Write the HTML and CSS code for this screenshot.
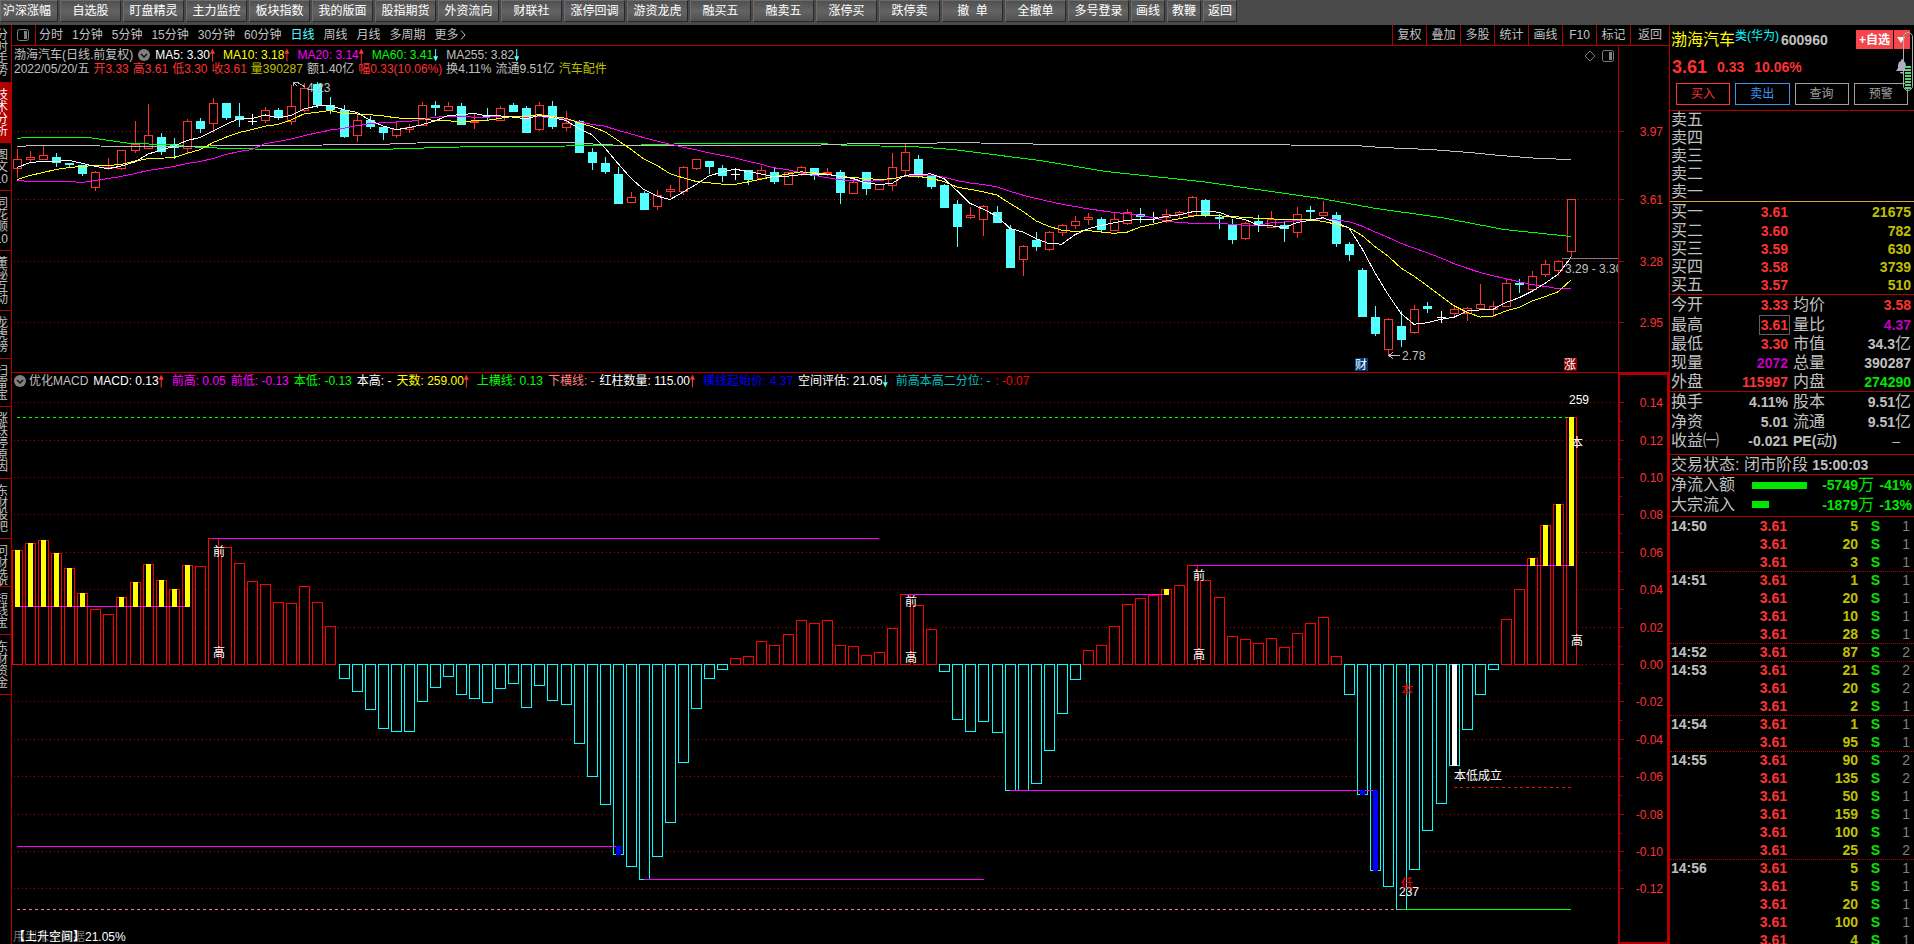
FILE: index.html
```html
<!DOCTYPE html>
<html lang="zh-CN">
<head>
  <meta charset="UTF-8">
  <meta name="viewport" content="width=device-width, initial-scale=1.0">
  <title>渤海汽车 600960</title>
  <link rel="stylesheet" href="styles.css">
</head>
<body>

<nav class="toolbar">
  <button>沪深涨幅</button>
  <button>自选股</button>
  <button>盯盘精灵</button>
  <button>主力监控</button>
  <button>板块指数</button>
  <button>我的版面</button>
  <button>股指期货</button>
  <button>外资流向</button>
  <button>财联社</button>
  <button>涨停回调</button>
  <button>游资龙虎</button>
  <button>融买五</button>
  <button>融卖五</button>
  <button>涨停买</button>
  <button>跌停卖</button>
  <button>撤&nbsp; 单</button>
  <button>全撤单</button>
  <button>多号登录</button>
  <button class="small">画线</button>
  <button class="small">教鞭</button>
  <button class="small">返回</button>
</nav>

<div class="layout">
  <aside class="side-tabs">
    <a href="#" class="first"><span>分</span><span>时</span><span>走</span><span>势</span></a>
    <a href="#" class="active"><span>技</span><span>术</span><span>分</span><span>析</span></a>
    <a href="#"><span>图</span><span>文</span><span>F10</span></a>
    <a href="#"><span>同</span><span>花</span><span>顺</span><span>F10</span></a>
    <a href="#"><span>董</span><span>秘</span><span>互</span><span>动</span></a>
    <a href="#"><span>龙</span><span>虎</span><span>榜</span></a>
    <a href="#"><span>扫</span><span>雷</span><span>宝</span></a>
    <a href="#"><span>涨</span><span>跌</span><span>停</span><span>原</span><span>因</span></a>
    <a href="#"><span>东</span><span>财</span><span>股</span><span>吧</span></a>
    <a href="#" class="cut"><span>问</span><span>财</span><span>选</span><span>股</span></a>
    <a href="#"><span>短</span><span>线</span><span>宝</span></a>
    <a href="#"><span>东</span><span>财</span><span>资</span><span>金</span></a>
  </aside>

  <main class="charts">
    <div class="period-bar">
      <button class="panel-toggle" aria-label="侧栏">
        <svg width="12" height="12" viewBox="0 0 12 12"><rect x="0.5" y="0.5" width="11" height="11" rx="2" fill="none" stroke="#808080"/><rect x="7" y="2" width="3" height="8" fill="#808080"/></svg>
      </button>
      <div class="periods">
        <a href="#">分时</a>
        <a href="#">1分钟</a>
        <a href="#">5分钟</a>
        <a href="#">15分钟</a>
        <a href="#">30分钟</a>
        <a href="#">60分钟</a>
        <a href="#" class="current">日线</a>
        <a href="#">周线</a>
        <a href="#">月线</a>
        <a href="#">多周期</a>
        <a href="#">更多<svg width="8" height="10" viewBox="0 0 8 10"><path d="M2 0.5 L6 5 L2 9.5" fill="none" stroke="#c0c0c0"/></svg></a>
      </div>
      <div class="tools">
        <a href="#">复权</a>
        <a href="#">叠加</a>
        <a href="#">多股</a>
        <a href="#">统计</a>
        <a href="#">画线</a>
        <a href="#">F10</a>
        <a href="#">标记</a>
        <a href="#">返回</a>
      </div>
    </div>

    <section class="panel price-panel">
      <div class="plot">
        <svg id="price-chart"></svg>
        <div class="legend">
          <span class="grey">渤海汽车(日线.前复权)</span>
          <svg class="chev" width="12" height="12" viewBox="0 0 12 12"><circle cx="6" cy="6" r="6" fill="#808080"/><path d="M3 5 L6 8 L9 5" fill="none" stroke="#111" stroke-width="1.5"/></svg>
          <span class="white up">MA5: 3.30</span>
          <span class="yellow up">MA10: 3.18</span>
          <span class="magenta up">MA20: 3.14</span>
          <span class="green down">MA60: 3.41</span>
          <span class="grey down">MA255: 3.82</span>
        </div>
        <div class="legend quote">
          <span class="grey">2022/05/20/五</span>
          <span class="red">开3.33</span>
          <span class="red">高3.61</span>
          <span class="red">低3.30</span>
          <span class="red">收3.61</span>
          <span class="gold">量390287</span>
          <span class="grey">额1.40亿</span>
          <span class="red">幅0.33(10.06%)</span>
          <span class="grey">换4.11%</span>
          <span class="grey">流通9.51亿</span>
          <span class="gold">汽车配件</span>
        </div>
        <div class="plot-icons">
          <svg width="12" height="12" viewBox="0 0 12 12"><path d="M6 1 L11 6 L6 11 L1 6 Z" fill="none" stroke="#808080"/></svg>
          <svg width="12" height="12" viewBox="0 0 12 12"><rect x="0.5" y="0.5" width="11" height="11" rx="2" fill="none" stroke="#808080"/><rect x="7" y="2" width="3" height="8" fill="#808080"/></svg>
        </div>
      </div>
      <svg class="axis" id="price-axis"></svg>
    </section>

    <section class="panel macd-panel">
      <div class="plot">
        <svg id="macd-chart"></svg>
        <div class="legend macd-legend">
          <svg class="chev" width="12" height="12" viewBox="0 0 12 12"><circle cx="6" cy="6" r="6" fill="#808080"/><path d="M3 5 L6 8 L9 5" fill="none" stroke="#111" stroke-width="1.5"/></svg>
          <span class="grey">优化MACD</span>
          <span class="white up">MACD: 0.13</span>
          <span class="magenta">前高: 0.05</span>
          <span class="magenta">前低: -0.13</span>
          <span class="green">本低: -0.13</span>
          <span class="white">本高: -</span>
          <span class="yellow up">天数: 259.00</span>
          <span class="green">上横线: 0.13</span>
          <span class="pink">下横线: -</span>
          <span class="white up">红柱数量: 115.00</span>
          <span class="blue">横线起始价: 4.37</span>
          <span class="white down">空间评估: 21.05</span>
          <span class="teal">前高本高二分位: -</span>
          <span class="pure-red">: -0.07</span>
        </div>
        <div class="note">
          <span class="note-back">用到未来数据</span>
          <span class="note-front">【上升空间】21.05%</span>
        </div>
      </div>
      <svg class="axis" id="macd-axis"></svg>
    </section>
  </main>

  <aside class="quote-panel">
    <div class="stock-head">
      <div class="stock-name">
        <span class="name">渤海汽车</span><span class="tag">类(华为)</span><span class="code">600960</span>
        <div class="add-group">
          <button class="add">+自选</button><button class="add-more" aria-label="更多自选"><svg width="8" height="6" viewBox="0 0 8 6"><path d="M0 0 H8 L4 6 Z" fill="#fff"/></svg></button>
        </div>
      </div>
      <div class="stock-price">
        <strong>3.61</strong><b>0.33</b><b>10.06%</b>
        <svg class="bell" width="12" height="16" viewBox="0 0 12 16"><path d="M6 0 C7 0 7 1 7 2 C10 3 10 6 10 9 L12 12 H0 L2 9 C2 6 2 3 5 2 C5 1 5 0 6 0 Z M4 13 H8 C8 15 4 15 4 13 Z" fill="#a9b0c4"/></svg>
      </div>
      <div class="trade-buttons">
        <button class="buy">买入</button>
        <button class="sell">卖出</button>
        <button>查询</button>
        <button>预警</button>
      </div>
      <div class="volume-meter"><i></i></div>
    </div>

    <table class="book asks">
      <tr><th>卖五</th><td></td><td></td></tr>
      <tr><th>卖四</th><td></td><td></td></tr>
      <tr><th>卖三</th><td></td><td></td></tr>
      <tr><th>卖二</th><td></td><td></td></tr>
      <tr><th>卖一</th><td></td><td></td></tr>
    </table>
    <table class="book bids">
      <tr><th>买一</th><td class="red">3.61</td><td class="gold">21675</td></tr>
      <tr><th>买二</th><td class="red">3.60</td><td class="gold">782</td></tr>
      <tr><th>买三</th><td class="red">3.59</td><td class="gold">630</td></tr>
      <tr><th>买四</th><td class="red">3.58</td><td class="gold">3739</td></tr>
      <tr><th>买五</th><td class="red">3.57</td><td class="gold">510</td></tr>
    </table>

    <table class="info">
      <tr><th>今开</th><td class="red">3.33</td><th>均价</th><td class="red">3.58</td></tr>
      <tr><th>最高</th><td class="red"><span class="boxed">3.61</span></td><th>量比</th><td class="purple">4.37</td></tr>
      <tr><th>最低</th><td class="red">3.30</td><th>市值</th><td>34.3<span class="unit">亿</span></td></tr>
      <tr><th>现量</th><td class="purple">2072</td><th>总量</th><td>390287</td></tr>
      <tr><th>外盘</th><td class="red">115997</td><th>内盘</th><td class="lime">274290</td></tr>
    </table>
    <table class="info ratios">
      <tr><th>换手</th><td>4.11%</td><th>股本</th><td>9.51<span class="unit">亿</span></td></tr>
      <tr><th>净资</th><td>5.01</td><th>流通</th><td>9.51<span class="unit">亿</span></td></tr>
      <tr><th>收益㈠</th><td>-0.021</td><th><b>PE(</b>动<b>)</b></th><td class="dash">–</td></tr>
    </table>

    <p class="status">交易状态: 闭市阶段 <b>15:00:03</b></p>

    <table class="flow">
      <tr><th>净流入额</th><td><i class="bar large"></i></td><td>-5749<span class="unit">万</span></td><td>-41%</td></tr>
      <tr><th>大宗流入</th><td><i class="bar"></i></td><td>-1879<span class="unit">万</span></td><td>-13%</td></tr>
    </table>

    <div class="ticks-wrap">
      <table class="ticks"><tbody id="ticks"></tbody></table>
    </div>
  </aside>
</div>

<script src="script.js"></script>
</body>
</html>
```
FILE: styles.css
```css
* {
  box-sizing: border-box;
}
body {
  margin: 0;
  height: 100vh;
  display: flex;
  flex-direction: column;
  overflow: hidden;
  background: #000;
  color: #c0c0c0;
  font: 12px/14px "Liberation Sans", "Noto Sans CJK SC", sans-serif;
}
a {
  color: inherit;
  text-decoration: none;
}
button {
  font: inherit;
  padding: 0;
  cursor: pointer;
}
svg {
  display: block;
}

/* colours */
.white { color: #fff; }
.grey { color: #c0c0c0; }
.yellow { color: #ff0; }
.magenta { color: #f0f; }
.green { color: #0f0; }
.lime { color: #00e600; }
.red { color: #ff3232; }
.pure-red { color: #f00; }
.gold { color: #c0c000; }
.pink { color: #ff8080; }
.blue { color: #00f; }
.teal { color: #00c0c0; }
.purple { color: #c000c0; }

/* top toolbar */
.toolbar {
  flex: none;
  display: flex;
  gap: 2px;
  height: 25px;
  padding-bottom: 3px;
  background: #4a4a4a;
}
.toolbar button {
  width: 61px;
  border: 1px solid #6c6c6c;
  border-right-color: #282828;
  border-bottom-color: #282828;
  background: linear-gradient(#505050, #646464 50%, #505050);
  color: #fff;
}
.toolbar button:first-child {
  width: 58px;
  padding-right: 4px;
}
.toolbar .small {
  width: 34px;
}

.layout {
  flex: 1;
  display: flex;
  min-height: 0;
}

/* left vertical tabs */
.side-tabs {
  flex: none;
  width: 12px;
  overflow: hidden;
  border-right: 1px solid #b00000;
}
.side-tabs a {
  display: flex;
  flex-direction: column;
  align-items: flex-end;
  padding: 6px 3px 5px 0;
  border-bottom: 1px solid #b00000;
  line-height: 12px;
}
.side-tabs .first {
  padding-top: 4px;
}
.side-tabs .active {
  background: #b00000;
  color: #fff;
}
.side-tabs .cut {
  height: 48px;
  overflow: hidden;
}

/* charts */
.charts {
  flex: 1;
  min-width: 0;
  display: flex;
  flex-direction: column;
}
.period-bar {
  flex: none;
  display: flex;
  height: 21px;
  line-height: 20px;
  border-bottom: 1px solid #b00000;
}
.panel-toggle {
  display: flex;
  align-items: center;
  width: 24px;
  padding-left: 5px;
  border: 0;
  border-right: 1px solid #b00000;
  background: none;
}
.periods {
  flex: 1;
  display: flex;
  gap: 9px;
  padding-left: 3px;
}
.periods a {
  display: flex;
  align-items: center;
}
.periods .current {
  color: #54ffff;
}
.tools {
  display: flex;
}
.tools a {
  width: 34px;
  border-left: 1px solid #b00000;
  text-align: center;
}
.tools a:last-child {
  width: 39px;
}
.panel {
  display: flex;
}
.price-panel {
  flex: none;
  height: 327px;
  border-bottom: 1px solid #b00000;
}
.macd-panel {
  flex: 1;
  min-height: 0;
}
.plot {
  position: relative;
  flex: 1;
  min-width: 0;
  overflow: hidden;
}
.plot > svg {
  position: absolute;
  inset: 0;
  width: 100%;
  height: 100%;
}
.axis {
  flex: none;
  width: 51px;
  height: 100%;
  border-left: 1px solid #b00000;
}
#macd-axis {
  border: 2px solid #b00000;
}
.legend {
  position: relative;
  display: flex;
  align-items: center;
  gap: 5px;
  height: 14px;
  padding-left: 2px;
  white-space: nowrap;
}
.price-panel .legend:first-of-type {
  margin-top: 2px;
}
.legend.quote {
  gap: 4px;
}
.macd-legend {
  margin-top: 1px;
}
.macd-legend .chev {
  margin-right: -2px;
}
.up, .down {
  display: flex;
  align-items: center;
  margin-right: 3px;
}
/* thin trend arrows after a value */
.up::after, .down::after {
  content: "";
  width: 5px;
  height: 13px;
  background: #ff3232;
  clip-path: polygon(40% 100%, 40% 40%, 0 40%, 50% 0, 100% 40%, 60% 40%, 60% 100%);
}
.down::after {
  background: #54ffff;
  clip-path: polygon(40% 0, 40% 60%, 0 60%, 50% 100%, 100% 60%, 60% 60%, 60% 0);
}
.plot-icons {
  position: absolute;
  top: 4px;
  right: 4px;
  display: flex;
  gap: 6px;
}
.note {
  position: absolute;
  left: 1px;
  bottom: 0;
  display: grid;
}
.note span {
  grid-area: 1 / 1;
}
.note-back {
  color: #707070;
}
.note-front {
  color: #fff;
}
svg text {
  font-size: 12px;
}

/* right quote panel */
.quote-panel {
  flex: none;
  width: 245px;
  display: flex;
  flex-direction: column;
  overflow: hidden;
  border-left: 1px solid #b00000;
}
.quote-panel table {
  flex: none;
  width: 100%;
  table-layout: fixed;
  border-collapse: separate;
  border-spacing: 0;
}
.quote-panel th {
  padding: 0;
  font-size: 16px;
  font-weight: normal;
  text-align: left;
  white-space: nowrap;
}
.quote-panel td {
  padding: 0;
  font-size: 14px;
  font-weight: bold;
  text-align: right;
  white-space: nowrap;
}
.quote-panel .unit {
  font-size: 16px;
  font-weight: normal;
  line-height: 1px;
}
.stock-head {
  position: relative;
  height: 86px;
  flex: none;
  padding: 5px 6px 0 1px;
  border-bottom: 1px solid #b00000;
}
.stock-name {
  display: flex;
  height: 20px;
  margin-right: -2px;
  line-height: 20px;
}
.stock-name .name {
  color: #ff0;
  font-size: 16px;
}
.stock-name .tag {
  color: #0ff;
  line-height: 12px;
}
.stock-name .code {
  margin-left: 2px;
  font-size: 14px;
  font-weight: bold;
}
.add-group {
  display: flex;
  gap: 1px;
  margin-left: auto;
}
.add-group button {
  height: 19px;
  border: 0;
  background: #f4464c;
  color: #fff;
  font-weight: bold;
}
.add {
  width: 37px;
}
.add-more {
  width: 16px;
  padding-left: 3px;
}
.stock-price {
  display: flex;
  align-items: center;
  gap: 10px;
  height: 33px;
  padding-left: 1px;
  color: #ff3232;
  font-size: 14px;
}
.stock-price strong {
  font-size: 18px;
}
.bell {
  margin-left: auto;
}
.trade-buttons {
  display: flex;
  gap: 5px;
  padding-left: 5px;
}
.trade-buttons button {
  flex: 1;
  height: 22px;
  border: 1px solid #a0a0a0;
  background: none;
  color: #a0a0a0;
}
.trade-buttons .buy {
  border-color: #ff3232;
  color: #ff3232;
}
.trade-buttons .sell {
  border-color: #3c96f0;
  color: #3c96f0;
}
.volume-meter {
  position: absolute;
  top: 7px;
  right: 1px;
  width: 10px;
  height: 59px;
  padding: 33px 1px 1px;
  border: 1px solid #b0b0b0;
  border-radius: 5px;
}
.volume-meter i {
  display: block;
  height: 23px;
  background: repeating-linear-gradient(#5ad278 0 2px, #000 2px 3px);
}
.book tr, .ticks tr {
  height: 18px;
}
.book th, .book td {
  line-height: 18px;
}
.quote-panel .book {
  border-bottom: 1px solid #b00000;
}
.quote-panel .asks {
  border-bottom-color: #e6a03c;
}
.book th {
  width: 60px;
  padding-left: 1px;
}
.book td:nth-child(2) {
  width: 58px;
}
.book td:last-child, .info td:last-child {
  padding-right: 3px;
}
.bids tr:first-child {
  height: 20px;
}
.quote-panel .info {
  border-bottom: 1px solid #b00000;
}
.info tr, .flow tr {
  height: 19px;
}
.info tr:first-child, .flow tr:first-child {
  height: 20px;
}
.info th, .info td, .flow th, .flow td {
  line-height: 18px;
}
.info th:nth-child(1) {
  width: 50px;
  padding-left: 1px;
}
.info td:nth-child(2) {
  width: 68px;
}
.info th:nth-child(3) {
  width: 52px;
  padding-left: 5px;
}
.info th b {
  font-size: 14px;
  line-height: 1px;
}
.boxed {
  outline: 1px solid #606060;
  outline-offset: 1px;
}
.quote-panel .info .dash {
  padding-right: 14px;
  font-weight: normal;
}
.quote-panel .ratios {
  border-bottom: 0;
}
.status {
  flex: none;
  height: 21px;
  margin: 4px 0 0;
  padding-left: 1px;
  border-top: 1px solid #b00000;
  border-bottom: 1px solid #b00000;
  font-size: 16px;
  line-height: 19px;
  white-space: nowrap;
}
.status b {
  font-size: 14px;
  line-height: 1px;
}
.flow {
  color: #00e600;
}
.flow th {
  width: 82px;
  padding-left: 1px;
  color: #c0c0c0;
}
.flow td:nth-child(2) {
  width: 56px;
}
.flow td:nth-child(3) {
  width: 66px;
}
.flow td:last-child {
  padding-right: 2px;
}
.flow .bar {
  display: block;
  width: 17px;
  height: 7px;
  background: #00e600;
}
.flow .large {
  width: 55px;
}
.ticks-wrap {
  flex: 1;
  min-height: 0;
  margin-top: 2px;
  overflow: hidden;
  border-top: 1px solid #b00000;
}
.ticks td {
  line-height: 17px;
  border-top: 1px solid transparent;
}
.ticks .minute td {
  border-top: 1px dotted #b00000;
}
.ticks tr:first-child td {
  border-top-color: transparent;
}
.ticks .time {
  width: 60px;
  padding-left: 1px;
  text-align: left;
}
.ticks .price {
  width: 57px;
}
.ticks .vol {
  width: 71px;
}
.ticks .side {
  width: 22px;
}
.ticks .count {
  padding-right: 4px;
  color: #808080;
  font-weight: normal;
}
```
FILE: script.js
```js
const BASE_WIDTH = 1606;   // plot width the x values below refer to
const FIRST_BAR = 5;
const STEP = 13.06;

// [high, body top, body bottom, low, type]  r = up, c = down, w = flat
const candles = [
  [103,113,123,132,'r'], [105,111,114,116,'r'], [100,109,114,114,'r'], [107,111,117,121,'c'],
  [117,117,119,122,'c'], [119,119,128,130,'c'], [125,126,142,145,'r'], [112,121,123,124,'r'],
  [104,104,123,124,'r'], [75,98,105,107,'r'], [58,89,103,103,'r'], [87,91,106,109,'c'],
  [92,98,102,113,'c'], [73,75,103,107,'r'], [72,75,83,87,'c'], [52,57,78,87,'r'],
  [57,57,72,74,'c'], [57,70,74,81,'c'], [68,75,75,79,'w'], [61,64,75,77,'r'],
  [62,64,72,74,'c'], [39,60,76,79,'r'], [37,42,65,66,'r'], [36,38,59,62,'c'],
  [51,59,64,68,'c'], [59,64,91,92,'c'], [68,74,90,96,'r'], [70,74,81,83,'c'],
  [81,81,87,94,'c'], [75,83,90,92,'r'], [78,81,84,87,'r'], [56,59,80,80,'r'],
  [55,59,62,70,'c'], [56,60,65,65,'r'], [57,60,79,79,'c'], [68,75,76,83,'r'],
  [62,70,71,75,'c'], [60,62,75,75,'r'], [57,59,66,66,'c'], [60,62,87,87,'c'],
  [56,59,84,85,'r'], [55,60,81,83,'c'], [65,77,82,85,'r'], [74,75,107,107,'c'],
  [102,106,117,124,'c'], [111,117,126,128,'c'], [121,128,158,158,'c'], [146,151,157,157,'r'],
  [145,147,164,164,'c'], [144,149,161,164,'r'], [139,143,146,151,'r'], [120,121,146,149,'r'],
  [113,113,123,124,'r'], [115,115,121,128,'c'], [119,122,130,136,'c'], [122,128,128,134,'w'],
  [124,124,134,139,'c'], [120,124,133,133,'r'], [121,126,136,138,'c'], [126,126,139,139,'r'],
  [120,121,127,130,'r'], [122,122,130,134,'c'], [122,126,128,130,'r'], [124,126,147,158,'c'],
  [133,136,148,148,'r'], [126,126,143,149,'c'], [138,138,144,144,'r'], [107,121,140,145,'r'],
  [98,106,125,129,'r'], [109,113,131,132,'c'], [130,130,141,143,'c'], [138,139,162,162,'c'],
  [154,158,181,201,'c'], [161,169,172,173,'r'], [159,160,174,190,'r'], [160,166,177,177,'c'],
  [179,183,222,222,'c'], [199,200,214,230,'r'], [186,194,201,205,'c'], [185,186,204,205,'r'],
  [178,179,187,190,'r'], [170,175,180,183,'r'], [167,171,174,179,'r'], [171,173,184,186,'c'],
  [167,173,185,185,'r'], [163,166,178,179,'r'], [162,168,171,177,'c'], [166,171,171,177,'w'],
  [163,168,172,177,'r'], [165,166,169,173,'r'], [150,151,170,170,'r'], [153,154,170,171,'c'],
  [168,171,173,183,'c'], [173,178,194,198,'c'], [176,177,193,194,'r'], [169,175,179,186,'c'],
  [165,173,182,182,'r'], [176,179,183,196,'c'], [161,168,187,192,'r'], [160,164,166,173,'c'],
  [155,166,170,170,'r'], [166,169,198,201,'c'], [196,198,209,215,'c'], [222,224,271,271,'c'],
  [260,271,288,290,'c'], [272,273,304,309,'r'], [265,280,294,301,'c'], [259,263,287,288,'r'],
  [256,260,263,267,'c'], [265,271,271,277,'w'], [261,263,268,271,'r'], [261,262,268,275,'r'],
  [238,258,263,263,'r'], [255,260,264,271,'r'], [233,237,261,261,'r'], [233,237,239,247,'c'],
  [225,230,244,244,'r'], [214,218,229,231,'r'], [214,215,225,230,'r'], [153,153,206,211,'r']
];

// values of the averages before enough bars are on screen
const ma5Start = [121, 116, 115, 115];
const ma10Start = [133, 129, 126, 123, 121, 120, 119, 119, 118];
const ma20Start = [134, 135, 135, 135, 135, 136, 134, 132, 130, 127, 124, 122, 120, 117, 115, 112, 108, 105, 103];

const ma60 = [[5,92],[13,91],[76,91],[118,97],[155,98],[188,101],[221,102],[265,103],[365,103],[428,101],
  [468,100],[496,100],[612,99],[679,97],[809,97],[836,99],[900,100],[941,103],[1028,114],[1094,125],
  [1189,135],[1309,152],[1364,162],[1429,171],[1492,183],[1559,190]];
const ma255 = [[5,100],[23,99],[38,99],[138,100],[258,99],[365,98],[418,96],[558,96],[588,98],[613,99],
  [796,99],[848,97],[913,97],[938,96],[998,97],[1044,98],[1213,98],[1343,99],[1370,101],[1418,103],
  [1458,106],[1488,109],[1528,112],[1559,113]];

// MACD column heights, positive above zero
const macd = [
  114,121,124,111,96,71,55,50,67,82,100,84,75,99,98,126,117,101,83,80,62,61,78,62,38,
  -14,-27,-45,-64,-67,-67,-37,-23,-12,-30,-34,-38,-24,-19,-43,-21,-36,-40,-79,-112,-140,-190,-202,-215,
  -192,-158,-98,-44,-14,-5,
  6,8,23,19,30,44,41,44,19,18,9,12,36,70,59,35,
  -7,-55,-67,-57,-68,-126,-126,-119,-86,-49,-15,
  14,19,38,60,66,69,75,79,99,84,67,28,25,21,26,17,31,41,47,8,
  -30,-130,-206,-222,-245,-205,-166,-139,-101,-65,-30,-5,
  45,75,106,139,160,247
];

// filled part of a column: [bar, from, to, colour]
const fills = [
  [46,-182,-190,'#00f'], [103,-126,-130,'#00f'], [104,-126,-206,'#00f'], [110,0,-101,'#fff'], [88,70,75,'#ff0']
];
[0,1,2,3,4,5,8,9,10,11,12,13].forEach(i => fills.push([i, 58, macd[i], '#ff0']));
[116,117,118,119].forEach(i => fills.push([i, 99, macd[i], '#ff0']));

// horizontal levels: [x1, x2, y, colour, dash]
const levels = [
  [5,1559,44,'#0f0','3 3'], [200,867,165,'#f0f'], [5,176,233,'#f0f'], [5,604,473,'#f0f'],
  [632,972,506,'#f0f'], [893,1152,221,'#f0f'], [998,1364,417,'#f0f'], [1181,1559,192,'#f0f'],
  [5,1389,536,'#ff8080','3 3'], [1389,1559,536,'#0f0'], [1442,1559,414,'#f00','3 3']
];

const macdTexts = [
  [201,183,'前','#fff'], [201,284,'高','#fff'],
  [893,233,'前','#fff'], [893,289,'高','#fff'],
  [1181,207,'前','#fff'], [1181,286,'高','#fff'],
  [1559,74,'本','#fff'], [1559,272,'高','#fff'],
  [1387,523,'237','#fff'], [1389,321,'本','#f00'], [1389,515,'低','#f00'],
  [1557,31,'259','#fff'], [1442,407,'本低成立','#fff']
];

const ZERO = 291;
const GRID = '#b00000';

function line(x1, y1, x2, y2, color, dash) {
  return `<line x1="${x1}" y1="${y1 + 0.5}" x2="${x2}" y2="${y2 + 0.5}" stroke="${color}"` +
    (dash ? ` stroke-dasharray="${dash}"` : '') + ' shape-rendering="crispEdges"/>';
}
function vline(x, y1, y2, color) {
  return `<line x1="${x + 0.5}" y1="${y1}" x2="${x + 0.5}" y2="${y2}" stroke="${color}" shape-rendering="crispEdges"/>`;
}
function fill(x, y, w, h, color) {
  return `<rect x="${x}" y="${y}" width="${w}" height="${h}" fill="${color}"/>`;
}
function frame(x, y, w, h, color, inner) {
  return `<rect x="${x + 0.5}" y="${y + 0.5}" width="${w - 1}" height="${Math.max(h - 1, 1)}" fill="${inner}" stroke="${color}"/>`;
}
function label(x, y, text, color, anchor) {
  return `<text x="${x}" y="${y}" fill="${color}"` + (anchor ? ` text-anchor="${anchor}"` : '') + `>${text}</text>`;
}
function curve(points, color) {
  return `<polyline points="${points.map(p => p.join(',')).join(' ')}" fill="none" stroke="${color}" shape-rendering="crispEdges"/>`;
}

function average(n, start) {
  const close = candles.map(c => c[4] === 'r' ? c[1] : c[2]);
  return close.map((v, i) => {
    if (i < start.length) return start[i];
    return close.slice(i - n + 1, i + 1).reduce((a, b) => a + b, 0) / n;
  });
}

function drawPrice() {
  const svg = document.getElementById('price-chart');
  const width = svg.clientWidth;
  const k = width / BASE_WIDTH;
  const X = x => Math.round(x * k);
  const barX = i => X(FIRST_BAR + i * STEP);
  let out = '';

  [85, 153, 215, 276].forEach(y => out += line(2, y, width, y, GRID, '1 3'));

  candles.forEach(([high, top, bottom, low, type], i) => {
    const x = barX(i);
    if (type === 'w') {
      out += vline(x, high, low, '#fff') + line(x - 4, top, x + 5, top, '#fff');
    } else if (type === 'c') {
      out += vline(x, high, low, '#54ffff') + fill(x - 4, top, 9, Math.max(bottom - top, 1), '#54ffff');
    } else {
      out += vline(x, high, top, '#ff3232') + vline(x, bottom, low, '#ff3232');
      out += frame(x - 4, top, 9, bottom - top, '#ff3232', '#000');
    }
  });

  const toPoints = values => values.map((v, i) => [barX(i), v + 0.5]);
  const scale = points => points.map(([x, y]) => [X(x), y + 0.5]);
  out += curve(scale(ma60), '#0f0');
  out += curve(scale(ma255), '#c0c0c0');
  out += curve(toPoints(average(20, ma20Start)), '#f0f');
  out += curve(toPoints(average(10, ma10Start)), '#ff0');
  out += curve(toPoints(average(5, ma5Start)), '#fff');

  // highest / lowest price marks
  out += curve([[X(281), 36], [X(285), 36], [X(293), 41]], '#c0c0c0');
  out += curve([[X(281), 40], [X(281), 36], [X(285), 40]], '#c0c0c0');
  out += label(X(295), 46, '4.23', '#c0c0c0');
  out += line(X(1377), 309, X(1388), 309, '#c0c0c0');
  out += curve([[X(1381), 306], [X(1377), 309.5], [X(1381), 313]], '#c0c0c0');
  out += label(X(1390), 314, '2.78', '#c0c0c0');

  out += line(X(1550), 212, width, 212, '#808080');
  out += label(X(1553), 227, '3.29 - 3.30', '#c0c0c0');

  out += fill(X(1343), 312, 13, 13, '#003c78') + label(X(1343), 323, '财', '#fff');
  out += fill(X(1552), 312, 13, 13, '#8c0000') + label(X(1552), 323, '涨', '#fff');
  svg.innerHTML = out;

  let axis = '';
  [[85, '3.97'], [153, '3.61'], [215, '3.28'], [276, '2.95']].forEach(([y, text]) => {
    axis += line(0, y, 5, y, GRID) + label(44, y + 5, text, '#ff3232', 'end');
  });
  document.getElementById('price-axis').innerHTML = axis;
}

function drawMacd() {
  const svg = document.getElementById('macd-chart');
  const width = svg.clientWidth;
  const k = width / BASE_WIDTH;
  const X = x => Math.round(x * k);
  const barX = i => X(FIRST_BAR + i * STEP);
  let out = '';
  let axis = '';

  for (let n = 7; n >= -6; n--) {
    const y = Math.round(ZERO - n * 37.4);
    out += line(2, y, width, y, GRID, '1 3');
    axis += line(0, y - 2, 4, y - 2, GRID);
    if (n > -6) axis += line(0, y + 17, 2, y + 17, GRID);
    axis += label(43, y + 3, (n * 0.02).toFixed(2), '#ff3232', 'end');
  }

  macd.forEach((h, i) => {
    const x = barX(i) - 5;
    out += h > 0 ? frame(x, ZERO - h, 11, h + 1, '#f00', '#000')
                 : frame(x, ZERO, 11, -h + 1, '#0ff', '#000');
  });
  levels.forEach(([x1, x2, y, color, dash]) => out += line(X(x1), y, X(x2), y, color, dash));
  fills.forEach(([i, from, to, color]) => {
    out += fill(barX(i) - 2, ZERO - Math.max(from, to), 5, Math.abs(to - from) + 1, color);
  });
  macdTexts.forEach(([x, y, text, color]) => out += label(X(x), y, text, color));

  svg.innerHTML = out;
  document.getElementById('macd-axis').innerHTML = axis;
}

const ticks = [
  ['14:50', 5, 1], ['', 20, 1], ['', 3, 1],
  ['14:51', 1, 1], ['', 20, 1], ['', 10, 1], ['', 28, 1],
  ['14:52', 87, 2],
  ['14:53', 21, 2], ['', 20, 2], ['', 2, 1],
  ['14:54', 1, 1], ['', 95, 1],
  ['14:55', 90, 2], ['', 135, 2], ['', 50, 1], ['', 159, 1], ['', 100, 1], ['', 25, 2],
  ['14:56', 5, 1], ['', 5, 1], ['', 20, 1], ['', 100, 1], ['', 4, 1]
];

document.getElementById('ticks').innerHTML = ticks.map(([time, vol, count]) => `
  <tr class="${time ? 'minute' : ''}">
    <td class="time">${time}</td>
    <td class="price red">3.61</td>
    <td class="vol gold">${vol}</td>
    <td class="side lime">S</td>
    <td class="count">${count}</td>
  </tr>`).join('');

function draw() {
  drawPrice();
  drawMacd();
}
draw();
window.addEventListener('resize', draw);
```
